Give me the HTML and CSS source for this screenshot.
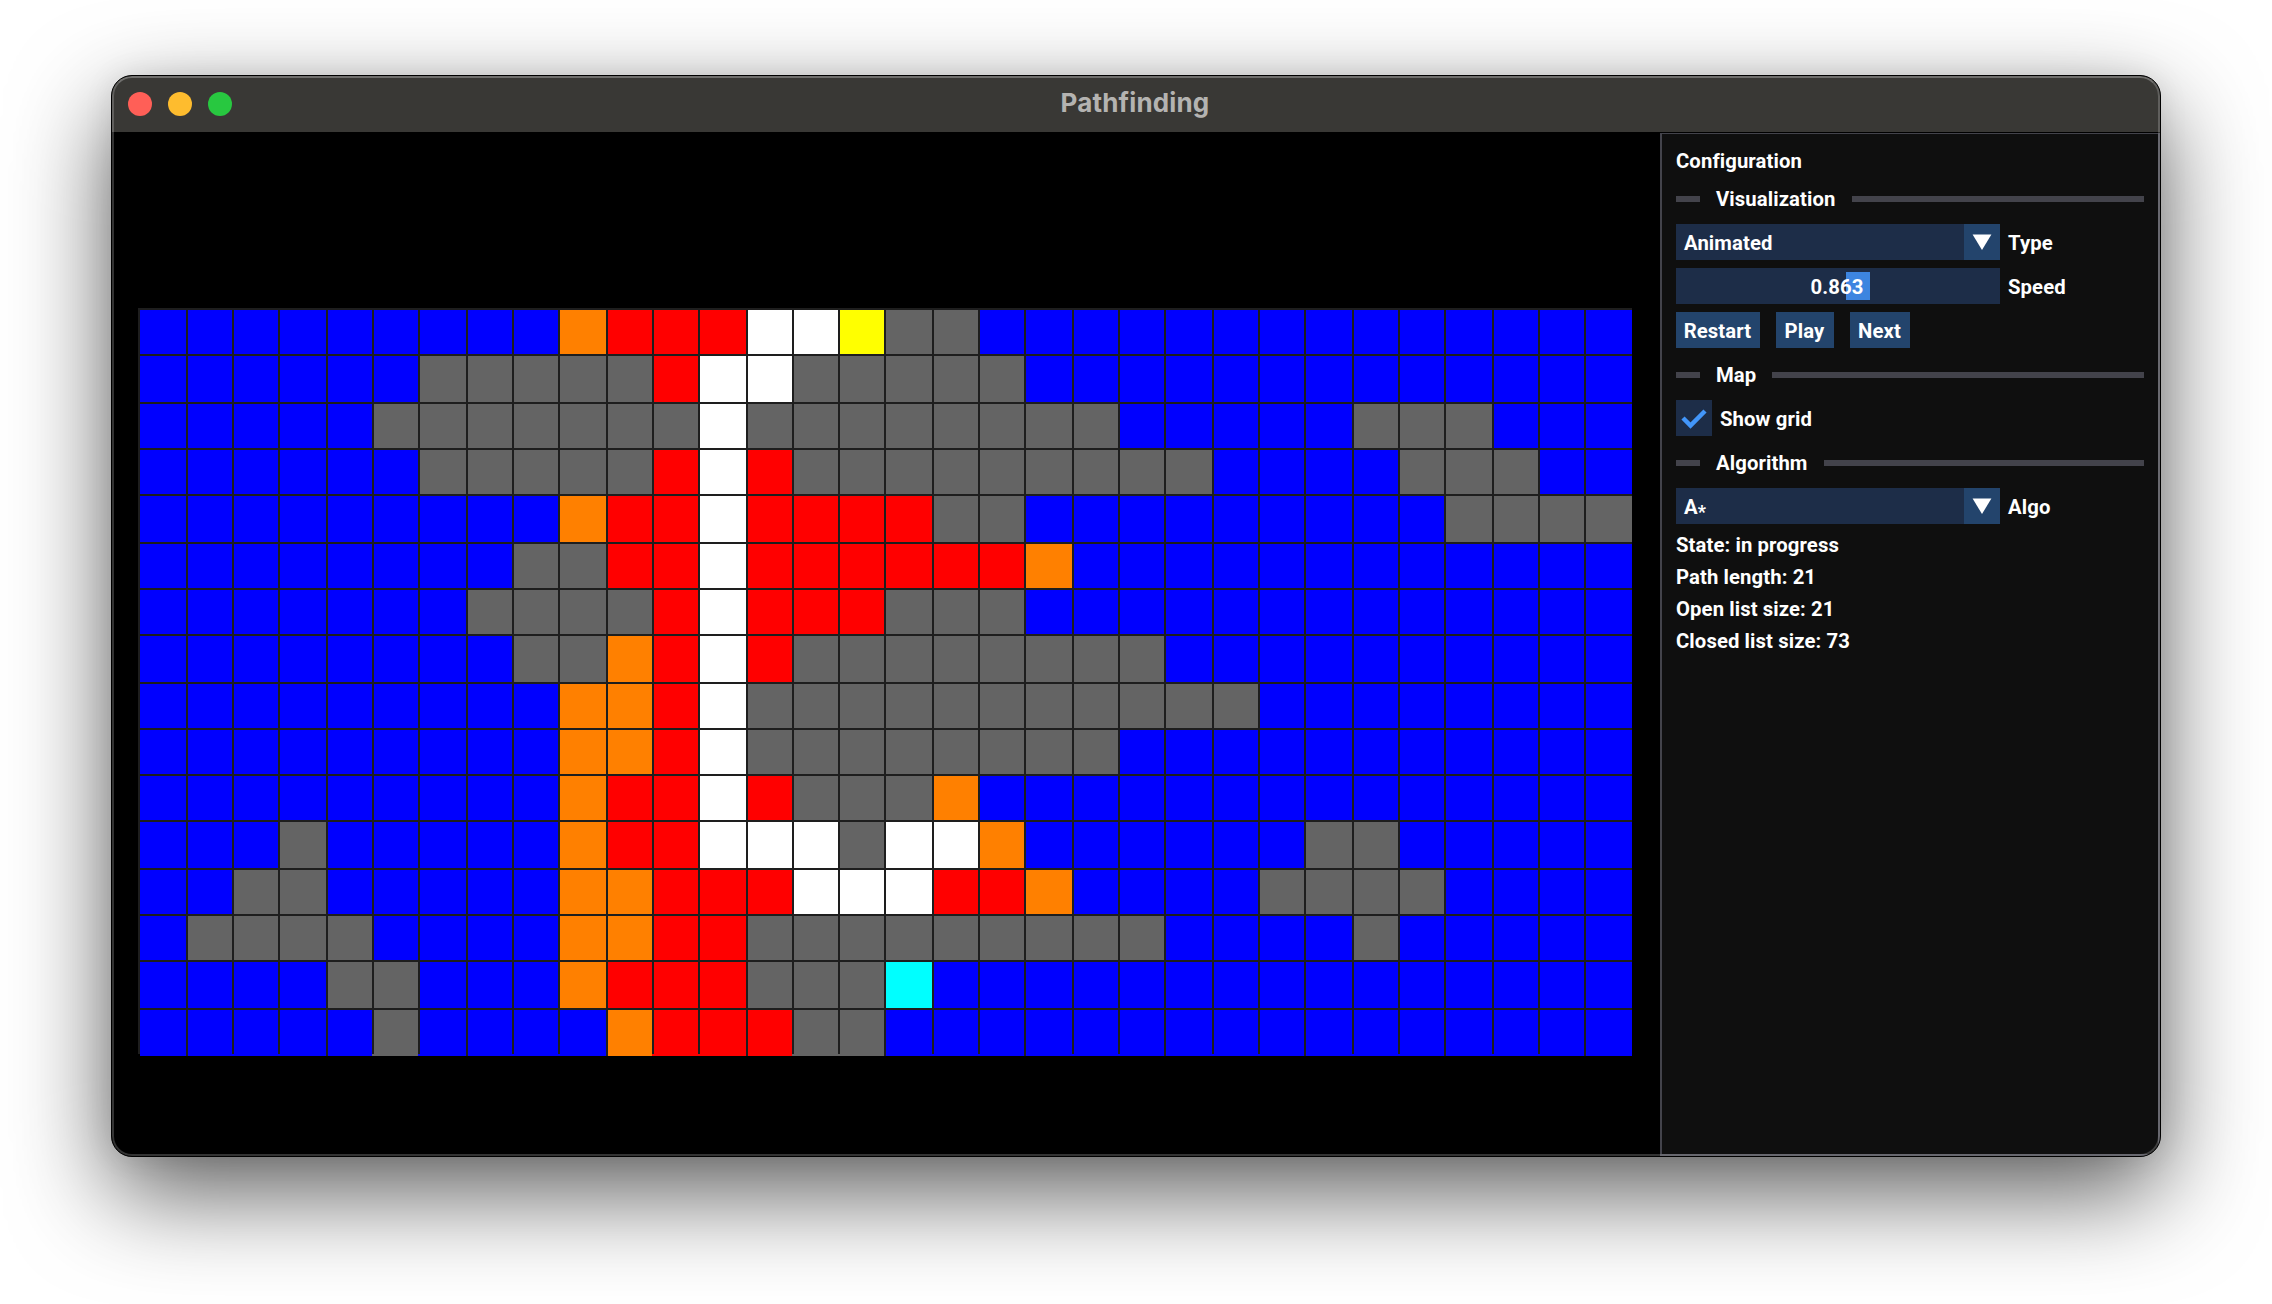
FILE: index.html
```html
<!DOCTYPE html>
<html lang="en">
<head>
<meta charset="utf-8">
<title>Pathfinding</title>
<link rel="stylesheet" href="styles.css">
</head>
<body>
<main class="window">
  <header class="titlebar">
    <div class="lights"><span class="light close"></span><span class="light minimize"></span><span class="light zoom"></span></div>
    <h1 class="title">Pathfinding</h1>
  </header>
  <div class="content">
    <section class="viewport"><div class="map" id="map"></div></section>
    <aside class="panel">
      <div class="text">Configuration</div>
      <div class="separator"><span>Visualization</span></div>
      <div class="row">
        <div class="combo"><span class="combo-value">Animated</span><span class="combo-arrow"><svg width="36" height="36" viewBox="0 0 36 36"><path d="M8.6 10.6h18.8L18 26z"/></svg></span></div>
        <span class="label">Type</span>
      </div>
      <div class="row">
        <div class="slider"><span class="grab"></span><span class="slider-value">0.863</span></div>
        <span class="label">Speed</span>
      </div>
      <div class="row buttons"><button class="restart">Restart</button><button class="play">Play</button><button class="next">Next</button></div>
      <div class="separator"><span>Map</span></div>
      <div class="row">
        <span class="checkbox"><svg width="36" height="36" viewBox="0 0 36 36"><path d="M7 18l7.5 7.5L29 11"/></svg></span>
        <span class="label">Show grid</span>
      </div>
      <div class="separator"><span>Algorithm</span></div>
      <div class="row">
        <div class="combo"><span class="combo-value">A<span class="star">*</span></span><span class="combo-arrow"><svg width="36" height="36" viewBox="0 0 36 36"><path d="M8.6 10.6h18.8L18 26z"/></svg></span></div>
        <span class="label">Algo</span>
      </div>
      <div class="text">State: in progress</div>
      <div class="text">Path length: 21</div>
      <div class="text">Open list size: 21</div>
      <div class="text">Closed list size: 73</div>
    </aside>
  </div>
</main>
<script src="map.js"></script>
</body>
</html>
```
FILE: styles.css
```css
* { box-sizing: border-box; }
body {
  margin: 0;
  height: 1304px;
  padding: 75px 111px 0;
  overflow: hidden;
  background: #fff;
  font: 700 20.3px/24px Roboto, sans-serif;
  letter-spacing: .1px;
  color: #fff;
}
.window {
  position: relative;
  display: flex;
  flex-direction: column;
  width: 2050px;
  height: 1082px;
  border: 1px solid #000;
  border-radius: 21px;
  overflow: hidden;
  background: #000;
  box-shadow: 0 36px 98px rgba(0, 0, 0, .64), 0 0 30px rgba(0, 0, 0, .08);
}
/* light rim drawn over the whole window */
.window::after {
  content: "";
  position: absolute;
  inset: 0;
  border: 2px solid rgba(255, 255, 255, .2);
  border-top-color: rgba(255, 255, 255, .28);
  border-radius: 20px;
  pointer-events: none;
}
.titlebar {
  display: grid;
  grid-template-columns: 1fr auto 1fr;
  align-items: center;
  flex: none;
  height: 56px;
  padding: 0 16px;
  background: #393835;
}
.lights { display: flex; gap: 16px; }
.light { width: 24px; height: 24px; border-radius: 50%; }
.close { background: #ff5f57; }
.minimize { background: #febc2e; }
.zoom { background: #28c840; }
.title {
  margin: 0;
  padding: 0 2px 2px 0;
  font: 700 26px/30px Inter, sans-serif;
  letter-spacing: .15px;
  color: #b4b3b1;
}
.content { display: flex; flex: 1; min-height: 0; }
.viewport { flex: 1; padding: 176px 0 0 26px; }
.map { display: grid; width: 1494px; height: 748px; }
.cell { border: solid #1e1e1e; border-width: 2px 0 0 2px; background-clip: padding-box; }
.open-bottom { border-left: 0; background-image: linear-gradient(#1e1e1e, #1e1e1e); background-size: 2px calc(100% - 2px); background-repeat: no-repeat; background-clip: border-box; }
.corner { background-image: linear-gradient(#1e1e1e, #1e1e1e), linear-gradient(#000, #000); background-size: 2px calc(100% - 2px), 2px 100%; }
.blue { background-color: #00f; }
.gray { background-color: #646464; }
.red { background-color: #f00; }
.orange { background-color: #ff8000; }
.white { background-color: #fff; }
.yellow { background-color: #ff0; }
.cyan { background-color: #0ff; }
.panel {
  display: flex;
  flex-direction: column;
  gap: 8px;
  width: 500px;
  margin-top: 1px;
  padding: 14px 14px 0;
  border: 2px solid #43434b;
  border-top-width: 1px;
  background: #0f0f0f;
}
.text { height: 24px; padding-top: 1px; white-space: nowrap; }
.separator { display: flex; align-items: center; gap: 16px; height: 36px; padding-top: 2px; }
.separator::before, .separator::after { content: ""; height: 6px; background: #43434b; }
.separator::before { width: 24px; }
.separator::after { flex: 1; }
.row { display: flex; align-items: center; gap: 8px; height: 36px; }
.label { padding-top: 2px; }
.combo { display: flex; width: 324px; height: 36px; background: #1d2d48; }
.combo-value { flex: 1; padding: 7px 8px 5px; }
.star { font-size: 18px; line-height: 1; vertical-align: -4px; }
.combo-arrow { width: 36px; background: #23446c; }
.combo-arrow path { fill: #fff; }
.slider { position: relative; width: 324px; height: 36px; background: #1d2d48; }
.grab { position: absolute; left: 170px; top: 4px; width: 24px; height: 28px; background: #3d85e0; }
.slider-value { position: relative; display: block; padding: 7px 2px 5px 0; text-align: center; }
.buttons { gap: 16px; }
button { height: 36px; padding: 2px 1px 0 0; border: 0; background: #23446c; font: inherit; letter-spacing: inherit; color: inherit; }
.restart { width: 84px; }
.play { width: 58px; }
.next { width: 60px; }
.checkbox { width: 36px; height: 36px; background: #1d2d48; }
.checkbox path { fill: none; stroke: #4296fa; stroke-width: 4.5; }
svg { display: block; }
```
FILE: map.js
```js
const rows = [
  "bbbbbbbbborrrwwyggbbbbbbbbbbbbbb",
  "bbbbbbgggggrwwgggggbbbbbbbbbbbbb",
  "bbbbbgggggggwggggggggbbbbbgggbbb",
  "bbbbbbgggggrwrgggggggggbbbbgggbb",
  "bbbbbbbbborrwrrrrggbbbbbbbbbgggg",
  "bbbbbbbbggrrwrrrrrrobbbbbbbbbbbb",
  "bbbbbbbggggrwrrrgggbbbbbbbbbbbbb",
  "bbbbbbbbggorwrggggggggbbbbbbbbbb",
  "bbbbbbbbboorwgggggggggggbbbbbbbb",
  "bbbbbbbbboorwggggggggbbbbbbbbbbb",
  "bbbbbbbbborrwrgggobbbbbbbbbbbbbb",
  "bbbgbbbbborrwwwgwwobbbbbbggbbbbb",
  "bbggbbbbboorrrwwwrrobbbbggggbbbb",
  "bggggbbbboorrgggggggggbbbbgbbbbb",
  "bbbbggbbborrrgggcbbbbbbbbbbbbbbb",
  "bbbbbgbbbborrrggbbbbbbbbbbbbbbbb"
];
const names = { b: "blue", g: "gray", r: "red", o: "orange", w: "white", y: "yellow", c: "cyan" };
const pitch = 23.3125;

function tracks(count, snap) {
  return Array.from({ length: count }, (_, i) =>
    2 * (snap(pitch * (i + 1)) - snap(pitch * i)) + (i === count - 1 ? 2 : 0) + "px").join(" ");
}

const map = document.getElementById("map");
map.style.gridTemplateColumns = tracks(32, Math.ceil);
map.style.gridTemplateRows = tracks(16, Math.round);
rows.forEach((row, y) => [...row].forEach((kind, x) => {
  const cell = document.createElement("div");
  cell.className = "cell " + names[kind];
  // only every third divider runs through to the lower edge of the map
  if (y === 15 && x % 3 !== 1) cell.classList.add("open-bottom");
  if (y === 15 && x === 0) cell.classList.add("corner");
  map.append(cell);
}));
```
